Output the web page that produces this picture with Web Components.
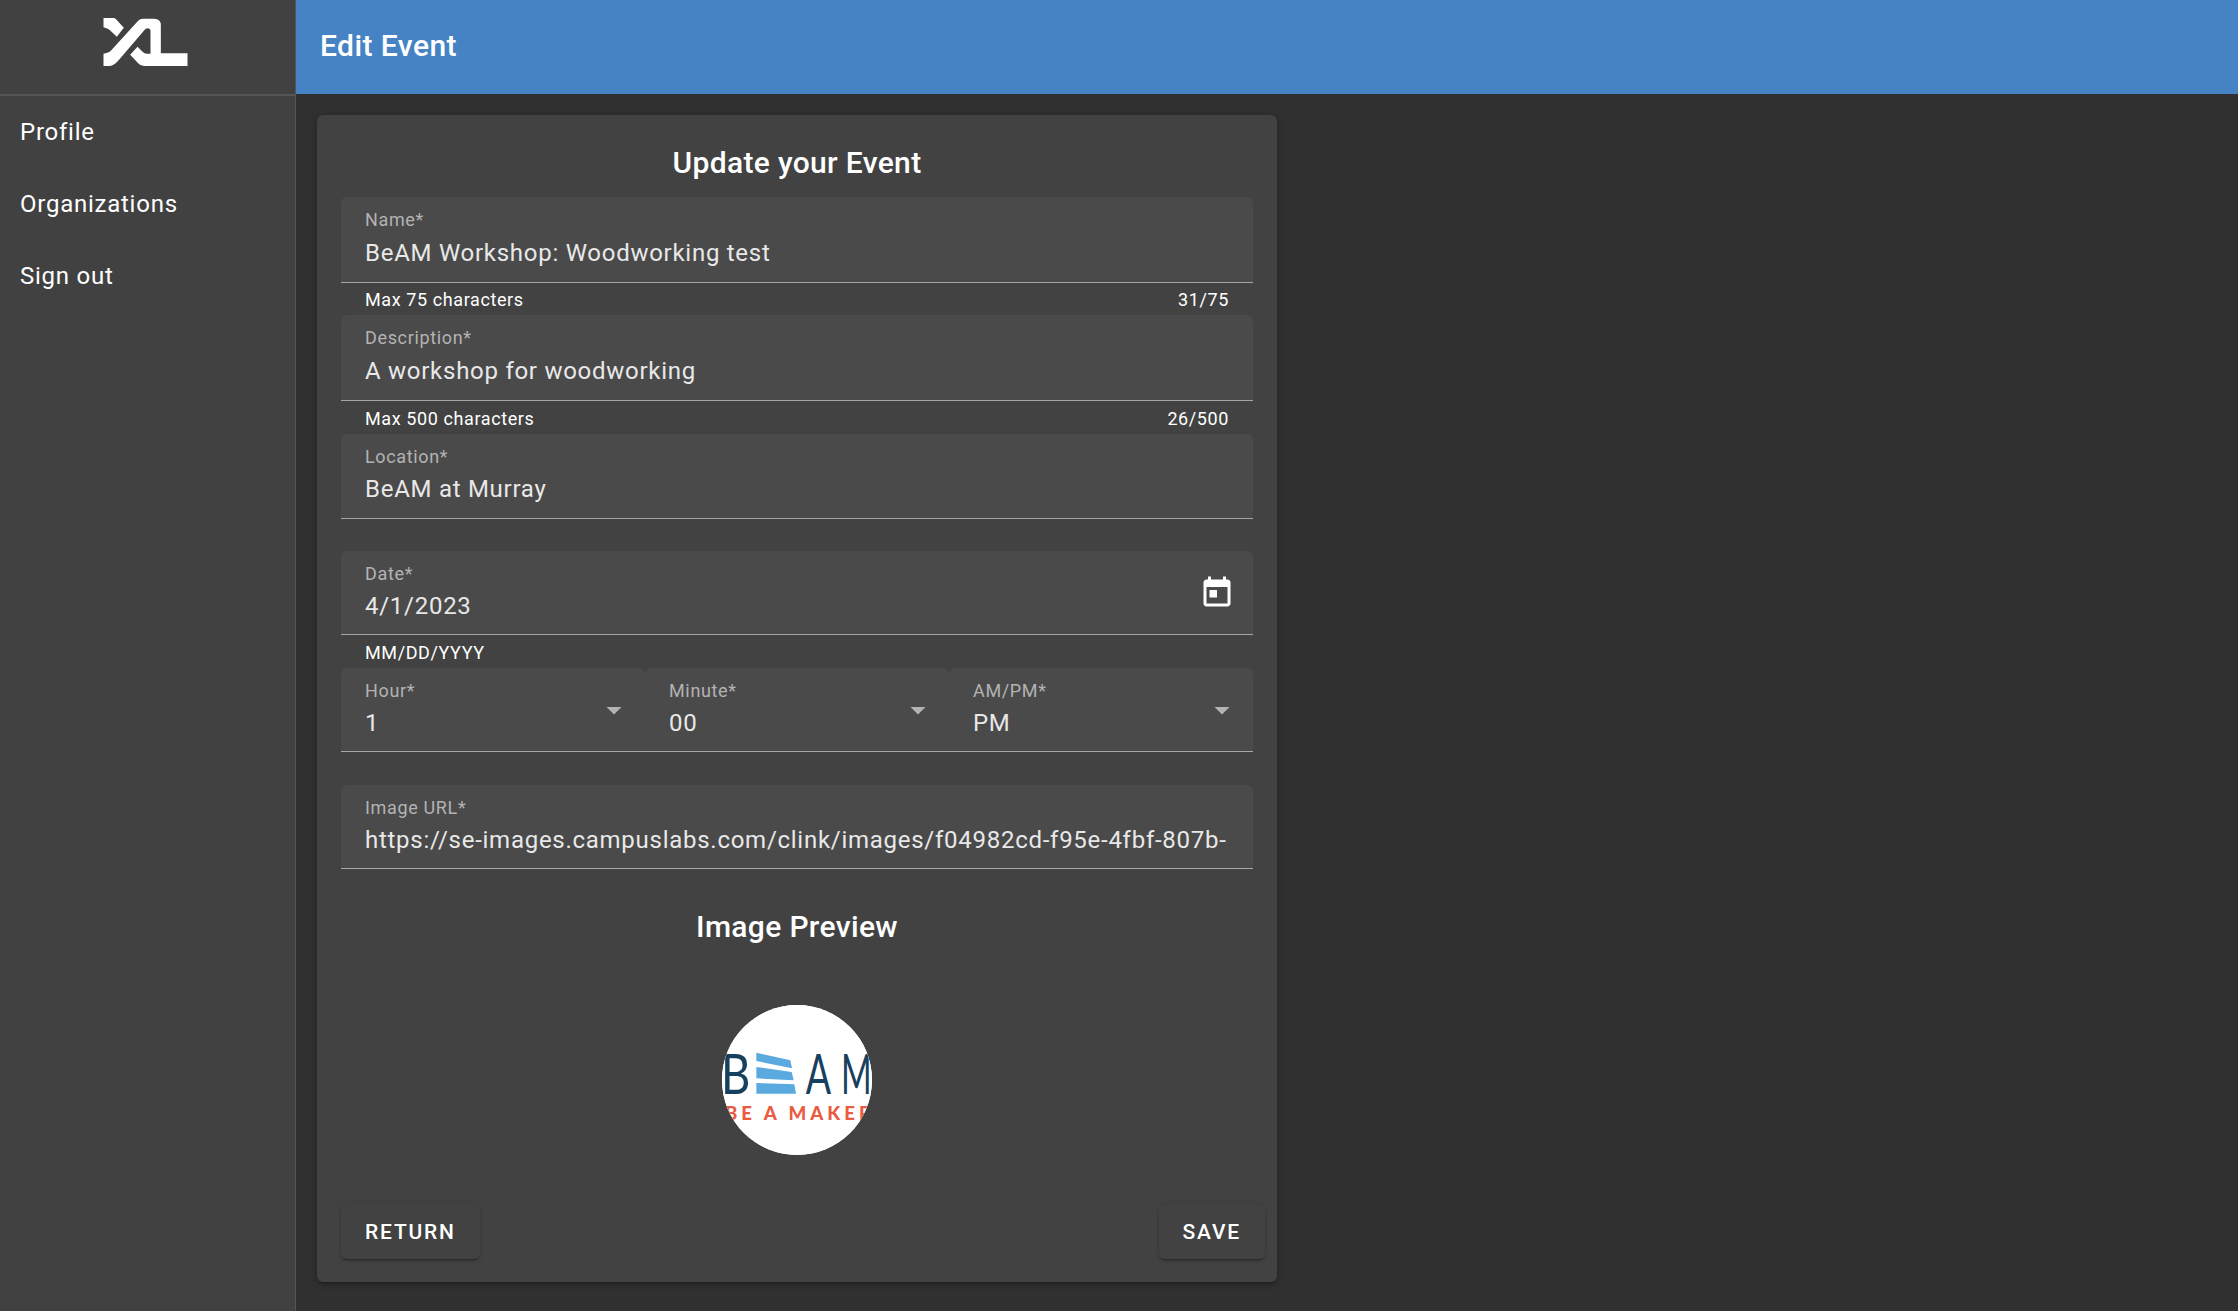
<!DOCTYPE html>
<html><head><meta charset="utf-8"><title>Edit Event</title>
<style>
html,body{margin:0;height:1311px;background:#303030;overflow:hidden;font-family:Roboto,"Liberation Sans",sans-serif;color:#fff}
</style></head><body>
<x-app>
  <x-sidebar slot="side">
    <x-nav-item>Profile</x-nav-item>
    <x-nav-item>Organizations</x-nav-item>
    <x-nav-item>Sign out</x-nav-item>
  </x-sidebar>
  <x-topbar slot="top">Edit Event</x-topbar>
  <x-card slot="main" heading="Update your Event">
    <x-rows>
      <x-row>
        <x-field style="--h:86px;--g:4px" label="Name*" value="BeAM Workshop: Woodworking test"></x-field>
        <x-helper style="--p:7px" left="Max 75 characters" right="31/75"></x-helper>
      </x-row>
      <x-row>
        <x-field style="--h:86px;--g:4px" label="Description*" value="A workshop for woodworking"></x-field>
        <x-helper style="--p:8px" left="Max 500 characters" right="26/500"></x-helper>
      </x-row>
      <x-row><x-field style="--h:85px;--g:3px" label="Location*" value="BeAM at Murray"></x-field></x-row>
      <x-row>
        <x-field label="Date*" value="4/1/2023" icon="date"></x-field>
        <x-helper left="MM/DD/YYYY"></x-helper>
      </x-row>
      <x-row>
        <x-triple>
          <x-field label="Hour*" value="1" icon="select"></x-field>
          <x-field label="Minute*" value="00" icon="select"></x-field>
          <x-field label="AM/PM*" value="PM" icon="select"></x-field>
        </x-triple>
      </x-row>
      <x-row><x-field label="Image URL*" value="https://se-images.campuslabs.com/clink/images/f04982cd-f95e-4fbf-807b-"></x-field></x-row>
    </x-rows>
    <x-preview heading="Image Preview"></x-preview>
    <x-actions>
      <x-button>Return</x-button>
      <x-button>Save</x-button>
    </x-actions>
  </x-card>
</x-app>
<script>
function def(name, css, html){
  customElements.define(name, class extends HTMLElement{
    connectedCallback(){
      if(this.shadowRoot) return;
      const r=this.attachShadow({mode:'open'});
      const get=a=>(this.getAttribute(a)||'');
      r.innerHTML='<style>'+css+'</style>'+(typeof html==='function'?html(get):html);
    }
  });
}
def('x-app',`:host{display:grid;grid-template-columns:296px 1fr;grid-template-rows:94px 1fr;height:1311px}
 .s{grid-row:1/3;grid-column:1}.t{grid-row:1;grid-column:2}.m{grid-row:2;grid-column:2;padding:21px 0 0 21px}`,
 `<div class="s"><slot name="side"></slot></div><div class="t"><slot name="top"></slot></div><div class="m"><slot name="main"></slot></div>`);
def('x-sidebar',`:host{display:block;height:1311px;box-sizing:border-box;background:#414141;border-right:1px solid #555}
 .logo{box-sizing:border-box;padding:18px 0 0 103px;border-bottom:2px solid #555;height:96px}
 nav{display:flex;flex-direction:column}`,
 `<div class="logo"><x-xl-logo></x-xl-logo></div><nav><slot></slot></nav>`);
def('x-xl-logo',`:host{display:block;width:85px;height:48px}svg{display:block}`,
 `<svg width="85" height="48" viewBox="24 24 252 144" fill="#fff">
  <path d="M24 24H54Q58 24 61 27L85 53L64 80L45 62Q40 57 33 55L24 52Z"/>
  <path d="M24 131L33 129Q40 128 46 122L128 32Q134 26 142 26L176 26Q196 26 196 46V130H276V168H146Q134 168 128 160L104 134L126 110L142 126Q147 131 154 131H165V64Q165 55 156 55Q151 55 147 60L70 150Q55 168 40 168H24Z"/>
 </svg>`);
def('x-nav-item',`:host{display:flex;align-items:center;height:72px;padding-left:20px;font:400 24px/36px Roboto,sans-serif;letter-spacing:.75px;color:#fff}`,`<slot></slot>`);
def('x-topbar',`:host{display:flex;align-items:center;height:94px;box-sizing:border-box;padding:0 0 2px 24px;background:#4583c4;font:500 30px/36px Roboto,sans-serif;letter-spacing:.43px;color:#fff}`,`<slot></slot>`);
def('x-card',`:host{display:block;width:960px;height:1167px;box-sizing:border-box;padding:24px;background:#424242;border-radius:6px;box-shadow:0 3px 3px -2px rgba(0,0,0,.2),0 3px 4px 0 rgba(0,0,0,.14),0 1px 8px 0 rgba(0,0,0,.12)}
 h2{margin:0 0 10px;height:48px;font:500 30px/48px Roboto,sans-serif;letter-spacing:.33px;text-align:center;color:#fff}`,
 g=>`<h2>${g('heading')}</h2><slot></slot>`);
def('x-rows',`:host{display:grid;grid-template-rows:118px 119px 117px 117px 117px 118px}`,`<slot></slot>`);
def('x-row',`:host{display:block}`,`<slot></slot>`);
def('x-triple',`:host{display:grid;grid-template-columns:repeat(3,1fr)}`,`<slot></slot>`);
def('x-field',`:host{display:block;position:relative;height:var(--h,84px);box-sizing:border-box;background:#4a4a4a;border-radius:6px 6px 0 0;border-bottom:1px solid #a6a6a6;padding:12px 24px 0;min-width:0}
 .l{font:400 18px/22px Roboto,sans-serif;letter-spacing:.65px;color:#b3b3b3;white-space:nowrap}
 .v{font:400 24px/36px Roboto,sans-serif;letter-spacing:.73px;color:#e8e8e8;white-space:nowrap;overflow:hidden;margin-top:var(--g,2.5px)}
 svg{position:absolute;display:block}
 .date{width:36px;height:36px;right:18px;top:24px;fill:#fff}
 .sel{width:36px;height:36px;right:13px;top:24px;fill:#b3b3b3}`,
 g=>`<div class="l">${g('label')}</div><div class="v">${g('value')}</div>`+
 (g('icon')==='date'?`<svg class="date" viewBox="0 0 24 24"><path d="M12 10H7v5h5zM16 1v2H8V1H6v2H5c-1.11 0-1.99.9-1.99 2L3 19c0 1.1.89 2 2 2h14c1.1 0 2-.9 2-2V5c0-1.1-.9-2-2-2h-1V1h-2zm3 18H5V8h14v11z"/></svg>`:'')+
 (g('icon')==='select'?`<svg class="sel" viewBox="0 0 24 24"><path d="M7 10l5 5 5-5z"/></svg>`:''));
def('x-helper',`:host{display:flex;justify-content:space-between;padding:var(--p,8px) 24px 0;font:400 18px/20px Roboto,sans-serif;letter-spacing:.6px;color:#fff}`,
 g=>`<span>${g('left')}</span><span>${g('right')}</span>`);
def('x-preview',`:host{display:block}
 h2{margin:0;height:48px;font:500 30px/48px Roboto,sans-serif;letter-spacing:.33px;text-align:center;color:#fff}
 .c{display:flex;justify-content:center;margin-top:54px}`,
 g=>`<h2>${g('heading')}</h2><div class="c"><x-beam-logo></x-beam-logo></div>`);
def('x-beam-logo',`:host{display:block;width:150px;height:150px;border-radius:50%;overflow:hidden;background:#fff}svg{display:block}
 text{font-family:Lato,"Open Sans",sans-serif}`,
 `<svg width="150" height="150" viewBox="21 -108 450 450">
  <rect x="21" y="-108" width="450" height="450" fill="#fff"/>
  <g fill="#17405f" font-size="170" font-weight="400">
   <text x="18" y="158" textLength="88" lengthAdjust="spacingAndGlyphs">B</text>
   <text x="272" y="158" textLength="76" lengthAdjust="spacingAndGlyphs">A</text>
   <text x="378" y="158" textLength="92" lengthAdjust="spacingAndGlyphs">M</text>
  </g>
  <g fill="#5aa9df">
   <path d="M124 35L226 58L231 82L124 60Z"/>
   <path d="M124 78L230 93L236 118L124 112Z"/>
   <path d="M124 126L238 130L243 158L124 158Z"/>
  </g>
  <text x="30" y="237" font-size="56" font-weight="900" letter-spacing="12" textLength="450" lengthAdjust="spacing" fill="#ea5b42">BE A MAKER</text>
 </svg>`);
def('x-actions',`:host{display:flex;justify-content:space-between;margin:49px -12px 0 0}`,`<slot></slot>`);
def('x-button',`:host{display:inline-flex;align-items:center;height:55px;box-sizing:border-box;padding:1px 24px 0;background:#424242;border-radius:6px;font:500 21px/1 Roboto,sans-serif;letter-spacing:1.8px;text-transform:uppercase;color:#fff;box-shadow:0 3px 1px -2px rgba(0,0,0,.2),0 2px 2px 0 rgba(0,0,0,.14),0 1px 5px 0 rgba(0,0,0,.12)}`,`<slot></slot>`);
</script>
</body></html>
